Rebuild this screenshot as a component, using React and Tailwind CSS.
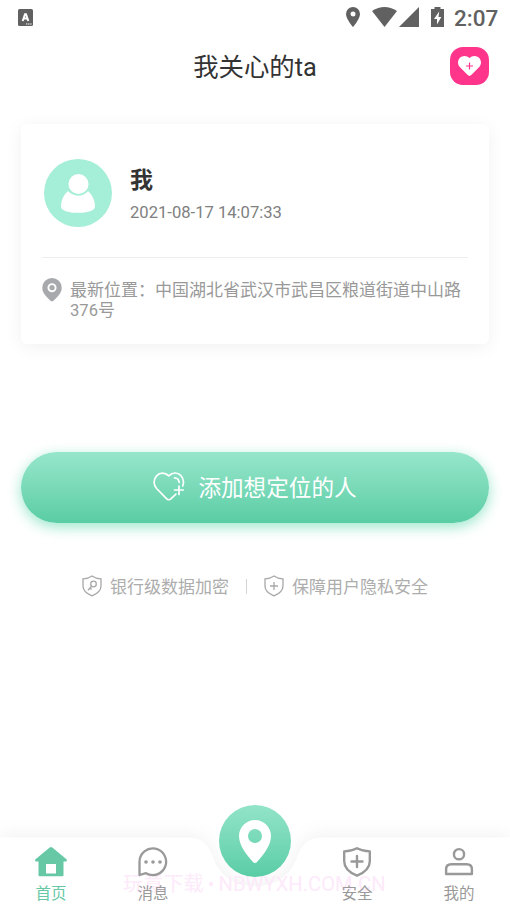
import React from 'react';

const StatusBar = () => (
  <div className="flex h-[34px] items-center justify-between pr-[12px] pl-[18px] text-[#616161]">
    <svg width="15" height="17" viewBox="0 0 15 17">
      <rect width="15" height="17" rx="1.5" fill="#616161" />
      <path d="M4.7 12 7 5.2h1L10.300 12M5.600 9.600h3.900" fill="none" stroke="#fff" strokeWidth="2" />
      <path d="M8 15h6" stroke="#fff" strokeWidth="1" strokeDasharray="1.4 .7" />
    </svg>
    <div className="flex items-center">
      <svg width="14" height="20" viewBox="0 0 14 20" fill="currentColor" fillRule="evenodd">
        <path d="M7 0a7 7 0 0 0-7 7c0 5 7 13 7 13s7-8 7-13a7 7 0 0 0-7-7Zm0 4.5a2.5 2.5 0 1 1 0 5 2.5 2.5 0 0 1 0-5Z" />
      </svg>
      <svg className="ml-[12px]" width="25" height="20" viewBox="0 0 25 20" fill="currentColor">
        <path d="M0 4Q12.500-4 25 4L12.500 20Z" />
      </svg>
      <svg className="ml-[2px]" width="20" height="20" viewBox="0 0 20 20" fill="currentColor">
        <path d="M20 0v20H0Z" />
      </svg>
      <svg className="ml-[12px]" width="13" height="20" viewBox="0 0 13 20">
        <path d="M3.500 0h6v2H13v18H0V2h3.500Z" fill="currentColor" />
        <path d="M8.200 4.500 3 12h3v5.500L10.300 10H7.500Z" fill="#fff" />
      </svg>
      <span className="ml-[10px] w-[44px] pt-[1px] font-[Roboto] text-[22.500px] leading-[32px] font-medium whitespace-nowrap">2:07</span>
    </div>
  </div>
);

const Header = () => (
  <header className="flex h-[64px] items-center justify-between px-[21px]">
    <div className="w-[39px]" />
    <h1 className="pt-[2px] text-[25.400px] leading-[34px] text-[#333]">我关心的ta</h1>
    <button className="flex h-[38px] w-[39px] items-center justify-center rounded-[13px] bg-[#ff348b]">
      <svg width="23" height="20" viewBox="0 0 23 20">
        <path d="M11.500 2.100C8.800-.7 4.500-.6 2 1.800-.7 4.500-.6 8.500 2 11.300l7.700 7.800c1.200 1.100 2.400 1.100 3.600 0l7.700-7.800c2.600-2.800 2.700-6.800 0-9.500-2.500-2.400-6.800-2.500-9.500.3Z" fill="#fff" />
        <path d="M8 10h7M11.500 6.500v7" stroke="#ff348b" strokeWidth="1.200" />
      </svg>
    </button>
  </header>
);

const PersonCard = () => (
  <section className="mx-[21px] mt-[26px] h-[220px] rounded-[6px] bg-white px-[21px] shadow-[0_3px_18px_rgba(0,0,0,0.06)]">
    <div className="flex h-[134px] border-b border-[#eee] pt-[35px] pl-[2px]">
      <svg width="68" height="68" viewBox="0 0 68 68">
        <circle cx="34" cy="34" r="34" fill="#a5eed7" />
        <path d="M24 32c4 5.500 16 5.500 20 0 4 3.500 7 9 7 15.500 0 4-7 6.300-17 6.300s-17-2.300-17-6.300C17 41 20 35.500 24 32Z" fill="#fff" />
        <circle cx="34.500" cy="25" r="10.800" fill="#fff" stroke="#a5eed7" strokeWidth="1.500" />
      </svg>
      <div className="ml-[18px]">
        <div className="mt-[5px] text-[23px] leading-[34px] font-bold text-[#333]">我</div>
        <div className="mt-[3px] text-[16.600px] leading-[24px] text-[#808080]">2021-08-17 14:07:33</div>
      </div>
    </div>
    <div className="flex pt-[19px]">
      <svg className="mt-[1px] shrink-0" width="20" height="24" viewBox="0 0 20 24">
        <path d="M10 0a9.700 9.700 0 0 0-9.700 9.700c0 5.300 4.200 9.200 8.200 13 .8.800 2.200.8 3 0 4-3.800 8.200-7.700 8.200-13A9.700 9.700 0 0 0 10 0Z" fill="#a7a9ad" />
        <circle cx="10" cy="9.700" r="3.600" fill="none" stroke="#fff" strokeWidth="1.900" />
      </svg>
      <p className="mt-[3px] ml-[8px] w-[400px] text-[17px] leading-[20px] text-[#999]">
        最新位置：中国湖北省武汉市武昌区粮道街道中山路<span className="text-[16.600px]">376</span>号
      </p>
    </div>
  </section>
);

const AddButton = () => (
  <button className="mx-[21px] mt-[107.500px] flex h-[71px] items-center justify-center rounded-full bg-linear-to-b from-[#96e6cb] to-[#59cda5] text-white shadow-[0_4px_14px_rgba(89,215,170,0.6)]">
    <svg className="mb-[1px]" width="32" height="29" viewBox="0 0 32 29" fill="none" stroke="#fff" strokeWidth="1.700" strokeLinecap="round" strokeLinejoin="round">
      <path d="M29.700 14c1.300-3.500.8-7.500-1.700-10.300-3.500-3.700-8.500-3.500-12.200.2C12.200.3 7 .1 3.600 3.800.2 7.500.3 12.800 3.600 16.500L13.500 26.700c1.400 1.400 3.200 1.400 4.600 0l4.800-4.600" />
      <path d="M21.500 5.800c2.700.1 4.500 1.900 4.600 4.700M26 14v8.500M21.500 18h8.700" />
    </svg>
    <span className="ml-[13px] pt-[4px] text-[22.600px] leading-[34px]">添加想定位的人</span>
  </button>
);

const Assurances = () => (
  <div className="mt-[52.500px] flex items-center justify-center text-[17px] leading-[22px] text-[#adadad]">
    <svg className="mb-[1px]" width="20" height="22" viewBox="0 0 20 22" fill="none" stroke="#a8a8a8" strokeWidth="1.300">
      <path d="M10 1c2.800 2 5.700 2.700 9 2.900v7c0 4.400-3.400 7.600-9 10-5.600-2.400-9-5.600-9-10v-7C4.300 3.700 7.200 3 10 1Z" />
      <circle cx="11.500" cy="9" r="2.800" />
      <path d="m9.600 11.200-3.600 4M8 13l1.600 1.500" />
    </svg>
    <span className="ml-[8px]">银行级数据加密</span>
    <span className="mx-[17px] h-[15px] w-px bg-[#d4d4d4]" />
    <svg className="mb-[1px]" width="20" height="22" viewBox="0 0 20 22" fill="none" stroke="#a8a8a8" strokeWidth="1.300">
      <path d="M10 1c2.800 2 5.700 2.700 9 2.900v7c0 4.400-3.400 7.600-9 10-5.600-2.400-9-5.600-9-10v-7C4.300 3.700 7.200 3 10 1ZM6 11h8M10 7v8" />
    </svg>
    <span className="ml-[8px]">保障用户隐私安全</span>
  </div>
);

const HomeIcon = () => (
  <svg width="32" height="30" viewBox="0 0 32 30">
    <path d="M14.700.6c.8-.7 1.800-.7 2.600 0l14.200 11.700c.8.700.4 2.300-.8 2.300H28.500V28c0 .8-.5 1.300-1.300 1.300H4.800c-.8 0-1.300-.5-1.300-1.300V14.600H1.300c-1.200 0-1.600-1.600-.8-2.300Z" fill="#67c8a6" />
    <path d="M11 17h10v9.500H11Z" fill="#fff" />
  </svg>
);

const MessageIcon = () => (
  <svg width="32" height="30" viewBox="0 0 32 30">
    <path d="M2.500 28V14.500A13.300 13.300 0 1 1 9 26.200Z" fill="none" stroke="#999" strokeWidth="2.300" strokeLinejoin="round" />
    <g fill="#999">
      <circle cx="9" cy="15" r="1.800" />
      <circle cx="16" cy="15" r="1.800" />
      <circle cx="23" cy="15" r="1.800" />
    </g>
  </svg>
);

const SafetyIcon = () => (
  <svg width="32" height="30" viewBox="0 0 32 30" fill="none" stroke="#999" strokeWidth="2.400" strokeLinecap="round" strokeLinejoin="round">
    <path d="M16 1.200c4 2.200 8 3 12.800 3.200v9.800c0 6.500-4.500 11-12.800 14.500C7.700 25.200 3.200 20.700 3.200 14.200V4.400C8 4.200 12 3.400 16 1.200ZM10.500 14.500h11M16 9v11" />
  </svg>
);

const MineIcon = () => (
  <svg width="32" height="30" viewBox="0 0 32 30" fill="none" stroke="#999" strokeWidth="2.400">
    <circle cx="16" cy="7.200" r="5.100" />
    <path d="M3.100 27V22.500c0-3.300 2-5.200 5.200-5.200h15.400c3.200 0 5.200 1.900 5.200 5.200V27Z" strokeLinejoin="round" />
  </svg>
);

const tabs = [
  { label: '首页', icon: <HomeIcon />, active: true },
  { label: '消息', icon: <MessageIcon /> },
  null,
  { label: '安全', icon: <SafetyIcon /> },
  { label: '我的', icon: <MineIcon /> }
];

const TabBar = () => (
  <nav className="relative mt-auto h-[101px]">
    {/* bar silhouette with the notch for the centre button */}
    <svg className="absolute inset-0 overflow-visible drop-shadow-[0_-3px_9px_rgba(0,0,0,0.05)]" width="510" height="101" viewBox="0 0 510 101">
      <path d="M0 32.500H186C201 32.500 207 38 212 50C219 71 234 81 255 81S291 71 298 50C303 38 309 32.500 324 32.500H510V101H0Z" fill="#fff" />
    </svg>
    <span className="absolute top-[65px] left-[123px] text-[20.200px] leading-[28px] whitespace-nowrap text-[#fdeafa]">
      玩意下载<span className="mx-[4px] text-[20px]">•</span>NBWYXH.COM.CN
    </span>
    <button className="absolute top-[0.400px] left-[219px] flex h-[72px] w-[72px] items-center justify-center rounded-full bg-linear-to-b from-[#92e4c9] to-[#59cda5]">
      <svg width="32" height="43" viewBox="0 0 32 43" fill="#fff" fillRule="evenodd">
        <path d="M16 0A16 16 0 0 0 0 16c0 10 8.500 19.800 14 26 1.200 1.200 2.800 1.200 4 0 5.500-6.200 14-16 14-26A16 16 0 0 0 16 0Zm0 9a7 7 0 1 1 0 14 7 7 0 0 1 0-14Z" />
      </svg>
    </button>
    <div className="relative grid h-full grid-cols-5 pt-[41.500px]">
      {tabs.map((tab, index) =>
        tab ? (
          <div key={index} className={`flex flex-col items-center ${tab.active ? 'text-[#67c8a6]' : 'text-[#999]'}`}>
            {tab.icon}
            <span className="mt-[6px] text-[15.500px] leading-[22px]">{tab.label}</span>
          </div>
        ) : (
          <div key={index} />
        )
      )}
    </div>
  </nav>
);

const App = () => (
  <div className="flex h-[906px] w-[510px] flex-col overflow-hidden bg-white font-[Roboto,'Noto_Sans_CJK_SC',sans-serif]">
    <StatusBar />
    <Header />
    <PersonCard />
    <AddButton />
    <Assurances />
    <TabBar />
  </div>
);

export default App;
